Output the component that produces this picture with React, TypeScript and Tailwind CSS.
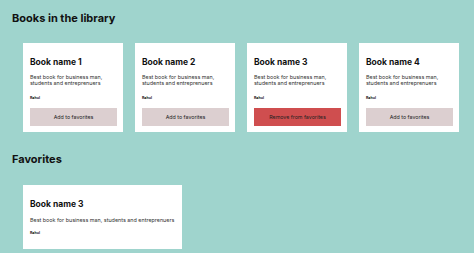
import React from "react";

type Book = { id: number; name: string };

const books: Book[] = [
  { id: 1, name: "Book name 1" },
  { id: 2, name: "Book name 2" },
  { id: 3, name: "Book name 3" },
  { id: 4, name: "Book name 4" },
];

const favorites = new Set([3]);

function Card({ book }: { book: Book }) {
  const fav = favorites.has(book.id);
  return (
    <div className="w-[100px] bg-white pt-[15px] pl-[7px] pr-[6px] pb-[6px] flex flex-col">
      <h2 className="text-[8.5px] leading-[9px] font-bold text-[#111]">{book.name}</h2>
      <p className="mt-[7px] text-[5.4px] leading-[6px] text-[#333]">
        Best book for business man, students and entreprenuers
      </p>
      <p className="mt-[10px] text-[3.6px] leading-[4px] font-bold text-[#111]">Rahul</p>
      <button
        className={
          "mt-[8px] h-[18px] w-full text-[5.3px] leading-[6px] text-[#222] " +
          (fav ? "bg-[#cf4e4f]" : "bg-[#dccfd0]")
        }
      >
        {fav ? "Remove from favorites" : "Add to favorites"}
      </button>
    </div>
  );
}

export default function App() {
  return (
    <div
      className="min-h-screen bg-[#9fd4cd] pl-[12px] pt-[12.5px] pb-[10px]"
      style={{ fontFamily: "Inter, 'Noto Sans', sans-serif" }}
    >
      <h1 className="text-[11px] leading-[11px] font-bold text-[#111]">Books in the library</h1>
      <div className="mt-[19.5px] ml-[11px] flex gap-[12px]">
        {books.map((b) => (
          <Card key={b.id} book={b} />
        ))}
      </div>
      <h1 className="mt-[21.5px] text-[11px] leading-[11px] font-bold text-[#111]">Favorites</h1>
      <div className="mt-[20.5px] ml-[11px] flex">
        <div className="w-[159px] bg-white pt-[15px] pl-[7px] pr-[6px] pb-[14px]">
          <h2 className="text-[8.5px] leading-[9px] font-bold text-[#111]">Book name 3</h2>
          <p className="mt-[7.7px] text-[5.4px] leading-[6px] text-[#333]">
            Best book for business man, students and entreprenuers
          </p>
          <p className="mt-[8px] text-[3.6px] leading-[4px] font-bold text-[#111]">Rahul</p>
        </div>
      </div>
    </div>
  );
}
